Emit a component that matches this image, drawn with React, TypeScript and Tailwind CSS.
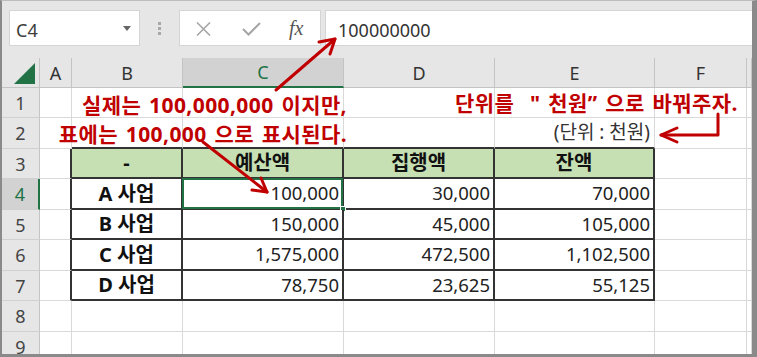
import React from 'react';

const FONT = { fontFamily: '"Noto Sans", "Noto Sans CJK KR", sans-serif' };

const COLS = ['A', 'B', 'C', 'D', 'E', 'F', ''];

const ROWS = [
    { label: 'A 사업', budget: '100,000', spent: '30,000', left: '70,000' },
    { label: 'B 사업', budget: '150,000', spent: '45,000', left: '105,000' },
    { label: 'C 사업', budget: '1,575,000', spent: '472,500', left: '1,102,500' },
    { label: 'D 사업', budget: '78,750', spent: '23,625', left: '55,125' },
];

const cell = 'border-r border-b border-[#d9d9d9] bg-white flex items-center overflow-visible';
const tbl = 'border-r-2 border-b-2 border-[#333] flex items-center';

const RowHead = ({ n, active }: { n: number; active?: boolean }) => (
    <div
        className={`flex items-center justify-center text-[18px] leading-none border-b border-[#d0d0d0] ${
            active
                ? 'bg-[#d2d2d2] text-[#217346] border-r-2 border-r-[#217346]'
                : 'bg-[#e6e6e6] text-[#444] border-r border-r-[#c4c4c4]'
        }`}
    >
        {n}
    </div>
);

const note = 'absolute text-[21px] font-bold text-[#c00000] leading-[24px] whitespace-nowrap tracking-[0.4px] [word-spacing:2px]';

export default function App() {
    return (
        <div
            className="relative w-[757px] h-[357px] overflow-hidden bg-[#e6e6e6] border-t border-t-[#bdbdbd] border-l-2 border-r-[5px] border-b-[3px] border-[#8a8a8a]"
            style={FONT}
        >
            {/* Formula bar */}
            <div className="h-[57px] flex items-start pt-[9px] pl-[7px]">
                <div className="w-[131px] h-[36px] bg-white border border-[#d4d4d4] flex items-center justify-between pl-[6px] pr-[8px]">
                    <span className="text-[18px] text-[#3c3c3c] leading-none mt-[3px]">C4</span>
                    <svg width="8" height="5" viewBox="0 0 8 5">
                        <polygon points="0,0 8,0 4,5" fill="#666" />
                    </svg>
                </div>
                <div className="w-[39px] h-[36px] flex flex-col items-center justify-center gap-[2px]">
                    <span className="w-[3px] h-[3px] bg-[#a8a8a8]" />
                    <span className="w-[3px] h-[3px] bg-[#a8a8a8]" />
                    <span className="w-[3px] h-[3px] bg-[#a8a8a8]" />
                </div>
                <div className="w-[142px] h-[36px] bg-white border border-[#d4d4d4] flex items-center pl-[15px]">
                    <svg width="17" height="14" viewBox="0 0 17 14" className="mt-[1px]">
                        <path d="M2 0.5 L15 13.5 M15 0.5 L2 13.5" stroke="#a6a6a6" strokeWidth="1.6" />
                    </svg>
                    <svg width="19" height="14" viewBox="0 0 19 14" className="ml-[30px] mt-[1px]">
                        <path d="M1 7 L6.5 12.5 L18 1" stroke="#a6a6a6" strokeWidth="2" fill="none" />
                    </svg>
                    <span
                        className="ml-[28px] text-[20px] italic text-[#555] leading-none"
                        style={{ fontFamily: '"Liberation Serif", serif' }}
                    >
                        fx
                    </span>
                </div>
                <div className="ml-[4px] flex-1 h-[36px] bg-white border border-[#d4d4d4] border-r-0 flex items-center pl-[12px]">
                    <span className="text-[18px] text-[#333] leading-none mt-[3px]">100000000</span>
                </div>
            </div>

            {/* Sheet */}
            <div className="grid grid-cols-[38px_32px_111px_161px_151px_160px_92px_1fr] grid-rows-[30px_30px_31px_30px_31px_30px_31px_30px_31px_30px]">
                {/* Column headers */}
                <div className="bg-[#e6e6e6] border-r border-b border-[#c4c4c4] flex items-end justify-end pr-[4px] pb-[3px]">
                    <svg width="21" height="21" viewBox="0 0 21 21">
                        <polygon points="21,0 21,21 0,21" fill="#217346" />
                    </svg>
                </div>
                {COLS.map((c) => (
                    <div
                        key={c || 'g'}
                        className={`flex items-center justify-center text-[18px] leading-none border-r border-[#c4c4c4] ${
                            c === 'C'
                                ? 'bg-[#d2d2d2] text-[#217346] border-b-2 border-b-[#217346]'
                                : 'bg-[#e6e6e6] text-[#333] border-b border-b-[#c4c4c4]'
                        }`}
                    >
                        {c}
                    </div>
                ))}

                {/* Row 1 */}
                <RowHead n={1} />
                {COLS.map((c) => (
                    <div key={'1' + c} className={cell} />
                ))}

                {/* Row 2 */}
                <RowHead n={2} />
                <div className={cell} />
                <div className={`${cell} border-b-2 border-b-[#333]`} />
                <div className={`${cell} border-b-2 border-b-[#333]`} />
                <div className={`${cell} border-b-2 border-b-[#333]`} />
                <div className={`${cell} border-b-2 border-b-[#333] justify-end pr-[4px] text-[19px] text-[#333] leading-none whitespace-nowrap`}>
                    (단위 : 천원)
                </div>
                <div className={cell} />
                <div className={cell} />

                {/* Row 3 - table header */}
                <RowHead n={3} />
                <div className={`${cell} border-r-2 border-r-[#333]`} />
                {['-', '예산액', '집행액', '잔액'].map((h) => (
                    <div key={h} className={`${tbl} bg-[#c6e0b4] justify-center text-[20px] font-bold text-[#111] leading-none`}>
                        {h}
                    </div>
                ))}
                <div className={cell} />
                <div className={cell} />

                {/* Rows 4-7 */}
                {ROWS.map((r, i) => (
                    <React.Fragment key={r.label}>
                        <RowHead n={4 + i} active={i === 0} />
                        <div className={`${cell} border-r-2 border-r-[#333]`} />
                        <div className={`${tbl} bg-white justify-center text-[20px] font-bold text-[#111] leading-none`}>
                            {r.label}
                        </div>
                        <div className={`${tbl} bg-white justify-end pr-[3px] text-[18.5px] text-[#222] leading-none relative`}>
                            {r.budget}
                            {i === 0 && (
                                <>
                                    <span className="absolute -left-[1px] -top-[1px] -right-[1px] -bottom-[1px] border-2 border-[#217346]" />
                                    <span className="absolute -right-[4px] -bottom-[4px] w-[6px] h-[6px] bg-[#217346] border border-white" />
                                </>
                            )}
                        </div>
                        <div className={`${tbl} bg-white justify-end pr-[3px] text-[18.5px] text-[#222] leading-none`}>
                            {r.spent}
                        </div>
                        <div className={`${tbl} bg-white justify-end pr-[3px] text-[18.5px] text-[#222] leading-none`}>
                            {r.left}
                        </div>
                        <div className={cell} />
                        <div className={cell} />
                    </React.Fragment>
                ))}

                {/* Rows 8-9 */}
                {[8, 9].map((n) => (
                    <React.Fragment key={n}>
                        <RowHead n={n} />
                        {COLS.map((c) => (
                            <div key={n + c} className={cell} />
                        ))}
                    </React.Fragment>
                ))}
            </div>

            {/* Annotations */}
            <div className={`${note} top-[92px] right-[405px]`}>실제는 100,000,000 이지만,</div>
            <div className={`${note} top-[121px] right-[405px]`}>표에는 100,000 으로 표시된다.</div>
            <div className={`${note} top-[90px] left-[453px]`}>단위를 &nbsp;" 천원” 으로 바꿔주자.</div>

            <svg className="absolute -left-[2px] -top-[1px] pointer-events-none" width="757" height="357">
                <g stroke="#c00000" strokeWidth="3" fill="none" strokeLinecap="round" strokeLinejoin="round">
                    <path d="M276 90 L335 39" />
                    <path d="M319 42 L335 39 L330 54" />
                    <path d="M203 142 L267 192" />
                    <path d="M261 178 L267 192 L252 190" />
                    <path d="M718 114 L718 135 L661 135" />
                    <path d="M677 128 L661 135 L677 142" />
                </g>
            </svg>
        </div>
    );
}
